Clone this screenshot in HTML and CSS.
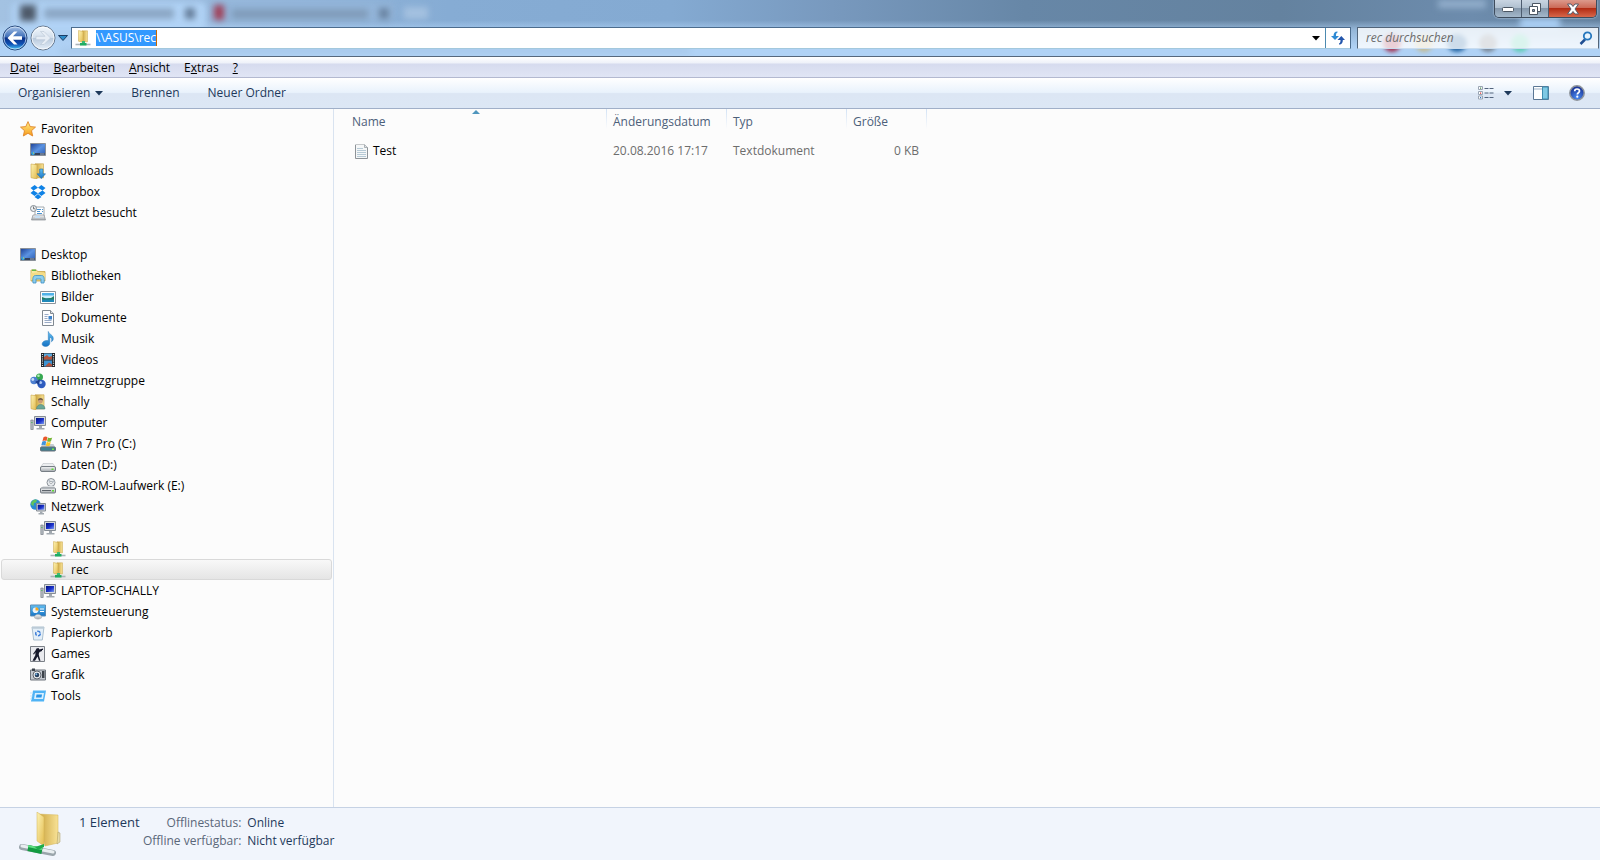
FILE: index.html
```html
<!DOCTYPE html>
<html lang="de">
<head>
<meta charset="utf-8">
<title>\\ASUS\rec</title>
<link rel="stylesheet" href="styles.css">
</head>
<body>
<svg class="sprite" aria-hidden="true">
  <defs>
    <linearGradient id="g-folder" x1="0" y1="0" x2="1" y2="1"><stop offset="0" stop-color="#fdf3b4"/><stop offset="1" stop-color="#e3bc50"/></linearGradient>
    <linearGradient id="g-folder2" x1="0" y1="0" x2="1" y2="0"><stop offset="0" stop-color="#c9a23c"/><stop offset="1" stop-color="#f8e296"/></linearGradient>
    <linearGradient id="g-blue" x1="0" y1="0" x2="1" y2="1"><stop offset="0" stop-color="#1c3f94"/><stop offset=".5" stop-color="#5b93e2"/><stop offset="1" stop-color="#2a59b0"/></linearGradient>
    <linearGradient id="g-sky" x1="0" y1="0" x2="0" y2="1"><stop offset="0" stop-color="#62bff2"/><stop offset="1" stop-color="#1673c4"/></linearGradient>
    <linearGradient id="g-grey" x1="0" y1="0" x2="0" y2="1"><stop offset="0" stop-color="#f6f7f8"/><stop offset="1" stop-color="#a3a8ad"/></linearGradient>
    <linearGradient id="g-star" x1="0" y1="0" x2="0" y2="1"><stop offset="0" stop-color="#fff08a"/><stop offset="1" stop-color="#f79a18"/></linearGradient>
    <linearGradient id="g-screen" x1="0" y1="0" x2="1" y2="1"><stop offset="0" stop-color="#00107c"/><stop offset=".55" stop-color="#1b32cc"/><stop offset="1" stop-color="#7b9bf2"/></linearGradient>
    <linearGradient id="g-back" x1="0" y1="0" x2="0" y2="1"><stop offset="0" stop-color="#a9c4e8"/><stop offset=".45" stop-color="#3f6fb8"/><stop offset=".5" stop-color="#0b3187"/><stop offset=".75" stop-color="#0d50b4"/><stop offset="1" stop-color="#4bd0fb"/></linearGradient>
    <linearGradient id="g-fwd" x1="0" y1="0" x2="0" y2="1"><stop offset="0" stop-color="#f3f8fd"/><stop offset=".48" stop-color="#d3dfec"/><stop offset=".5" stop-color="#b7c8db"/><stop offset="1" stop-color="#e6f0fa"/></linearGradient>
    <radialGradient id="g-help" cx=".5" cy=".8" r=".8"><stop offset="0" stop-color="#4a8af0"/><stop offset="1" stop-color="#142a8c"/></radialGradient>
  </defs>
  <symbol id="star" viewBox="0 0 16 16"><path d="M8 .6l2.200 5 5.300.5-4 3.600 1.200 5.300L8 12.300 3.300 15l1.200-5.300-4-3.600 5.300-.5z" fill="url(#g-star)" stroke="#e0862a" stroke-width=".9"/></symbol>
  <symbol id="desktop" viewBox="0 0 16 16"><path d="M.5 1.500h15v12H.5z" fill="url(#g-blue)" stroke="#8a9098"/><path d="M1 11h14v2H1z" fill="#34435c"/><circle cx="3" cy="11.500" r="1.800" fill="#2f9fe0"/><path d="M3 10l1.500 1.500H3z" fill="#f3d042"/><path d="M10 11.500h4.500v1H10z" fill="#9fb1c8"/></symbol>
  <symbol id="downloads" viewBox="0 0 16 16"><path d="M5 .8h8.500v14H5z" fill="url(#g-folder2)" stroke="#c09a40" stroke-width=".6"/><path d="M1 1l6 .8V16l-6-1.300z" fill="url(#g-folder)" stroke="#c9a549" stroke-width=".6"/><path d="M9.700 6h3.200v4.800h2.600L11.300 15.600 7.100 10.800h2.600z" fill="url(#g-sky)" stroke="#1d6cab" stroke-width=".6"/></symbol>
  <symbol id="dropbox" viewBox="0 0 16 16"><path d="M4.700 1L8 3.700 3.500 6.500.5 4zM11.300 1L8 3.700l4.500 2.800 3-2.500zM.5 9l3-2.500L8 9.300 4.700 12zM15.500 9l-3-2.500L8 9.300 11.300 12zM8 10l3.500 2.900L8 15.200l-3.500-2.300z" fill="#0f82e6"/></symbol>
  <symbol id="recent" viewBox="0 0 16 16"><path d="M5 2h9v9H5z" fill="#fff" stroke="#8c949c" stroke-width=".8"/><path d="M7 4.500h4m1 0h1M7 6.500h3m2 0h1M7 8.500h5" stroke="#4b94d2"/><path d="M3 10h11l1.500 5H1.500z" fill="url(#g-grey)" stroke="#868c92" stroke-width=".7"/><path d="M5 10.500h5v2.500H5z" fill="#c6dff4"/><circle cx="3.500" cy="3.500" r="3" fill="#eef2f5" stroke="#828a92"/><path d="M3.500 1.500v2.300H5.300" stroke="#555" stroke-width=".8" fill="none"/></symbol>
  <symbol id="library" viewBox="0 0 16 16"><path d="M1 2h5.500l1 1.500H15V13H1z" fill="url(#g-folder)" stroke="#c6a348" stroke-width=".8"/><path d="M2 1.500h4v1.500H2z" fill="#65b84a"/><path d="M1 5h14v7H1z" fill="#f5dc86"/><path d="M3 15c-.7-5 .2-7.500 2.500-7.500h6c2.500 0 3.200 2.500 2.500 7.500h-3v-4H6v4z" fill="#8ccdee" stroke="#3e8fc4" stroke-width=".8"/></symbol>
  <symbol id="picture" viewBox="0 0 16 16"><path d="M.5 2.500h15v12H.5z" fill="#fff" stroke="#8d949c"/><path d="M2 4h12v9H2z" fill="#4fb1e8"/><path d="M2 6.500h12V9H2z" fill="#cfeefb"/><path d="M2 8l4 1.500 5-.5 3-2v4H2z" fill="#237d62"/><path d="M2 10.500h12V13H2z" fill="#2089b8"/></symbol>
  <symbol id="document" viewBox="0 0 16 16"><path d="M2.500.5h8l3 3v12h-11z" fill="#fdfdfe" stroke="#818991"/><path d="M10.500.5v3h3" fill="#dde2e7" stroke="#818991"/><path d="M4.500 4.500h4M4.500 6.500h3M4.500 8.500h3M4.500 10.500h7M4.500 12.500h7" stroke="#9aabc6"/><path d="M8.500 6h3.500v3.500H8.500z" fill="#3d82c9"/></symbol>
  <symbol id="music" viewBox="0 0 16 16"><path d="M8.300.5c.8 3 5.700 3.600 4.900 8-.3 1-.8 1.700-1.700 2.200.8-3-.3-4-1.700-4.500v5.800c0 2-1.900 3.500-4.200 3.500-2 0-3.500-1-3.500-2.500 0-1.900 2.200-3.500 4.700-3.500.6 0 1.100.1 1.500.3z" fill="url(#g-sky)" stroke="#2477b8" stroke-width=".5"/></symbol>
  <symbol id="video" viewBox="0 0 16 16"><path d="M1 1h14v14H1z" fill="#22262b"/><path d="M4 1.500h8v6H4z" fill="#5aa9dc"/><path d="M4 8.500h8v6H4z" fill="#3c93d2"/><path d="M4 5l3-2 2 2 3-1v3.500H4zM5 14.500l4-4 3 2v2z" fill="#b5533a"/><path d="M2.500 2v13M13.500 2v13" stroke="#e6e9ec" stroke-width="1.200" stroke-dasharray="1 1.200"/></symbol>
  <symbol id="homegroup" viewBox="0 0 16 16"><circle cx="9.500" cy="4" r="3.500" fill="#36a850"/><circle cx="4" cy="7.500" r="3.700" fill="#4d7fd0"/><circle cx="11.500" cy="11" r="4.200" fill="#2e5cbf"/><circle cx="8.500" cy="2.800" r="1.300" fill="#b4ecba"/><circle cx="2.800" cy="6.500" r="1.400" fill="#c8dcf8"/><circle cx="10.500" cy="9.500" r="1.600" fill="#a8c6f4"/><path d="M5 9l4 3 1-6z" fill="#1b3f8f"/></symbol>
  <symbol id="user" viewBox="0 0 16 16"><path d="M5 .8h9v14H5z" fill="url(#g-folder2)" stroke="#c09a40" stroke-width=".6"/><path d="M1 1l5 .8V16l-5-1.300z" fill="url(#g-folder)" stroke="#c9a549" stroke-width=".6"/><circle cx="10.500" cy="7" r="2.400" fill="#c99a78"/><path d="M8 6.500c0-3.200 5-3.200 5 0-2-1.200-3-1-5 0z" fill="#6d5a45"/><path d="M6.500 15c0-6 8.500-6 8.500 0z" fill="#6ba698" stroke="#467a70" stroke-width=".5"/></symbol>
  <symbol id="computer" viewBox="0 0 16 16"><path d="M.8 5h2.400v9.500H.8z" fill="#b5bbc2" stroke="#6f767e" stroke-width=".6"/><path d="M1.400 7.500h1" stroke="#3ab54a"/><path d="M4.500 1.500h11v9h-11z" fill="#d4d8dc" stroke="#858c94"/><path d="M6 3h8v6H6z" fill="url(#g-screen)"/><path d="M9 11h3v2h2.500v1.500h-8V13H9z" fill="#a2a9b0"/></symbol>
  <symbol id="windrive" viewBox="0 0 16 16"><path d="M2.500 8h11l2 4H.5z" fill="#c6cdd2"/><rect x=".5" y="11" width="15" height="4" rx="1" fill="#3e8091" stroke="#697178"/><path d="M12 12.500h2V14h-2z" fill="#7bea43"/><path d="M3.500 1.200q2-1.500 4 0L6.500 5q-2-1.200-4 0z" fill="#e9572b"/><path d="M8 1.500q2 1.200 4.200 0L11 5.300q-2 1-4 0z" fill="#77b635"/><path d="M2.300 5.500q2-1.200 4 0l-1 3.800q-2-1.200-4 0z" fill="#3e93dc"/><path d="M6.800 5.800q2 1.200 4 0l-1 3.800q-2 1-4 0z" fill="#f8c627"/></symbol>
  <symbol id="drive" viewBox="0 0 16 16"><path d="M3 6.500h10l2.500 4H.5z" fill="#eceef0" stroke="#b0b5ba" stroke-width=".5"/><rect x=".5" y="9.500" width="15" height="5" rx="1.500" fill="url(#g-grey)" stroke="#777e85"/><path d="M11.500 11.500h2V13h-2z" fill="#5ddb33"/></symbol>
  <symbol id="disc" viewBox="0 0 16 16"><circle cx="11" cy="4.500" r="4" fill="#e8ebee" stroke="#8b9299"/><path d="M11 4.500L8.500 2M11 4.500l3.500-1.500" stroke="#b7bfc8" stroke-width="1.500"/><circle cx="11" cy="4.500" r="1.200" fill="#fff" stroke="#81888f" stroke-width=".6"/><path d="M3 8h11l1.500 2.500H.5z" fill="#dde0e3"/><rect x=".5" y="10" width="15" height="5" rx="1" fill="url(#g-grey)" stroke="#777e85"/><path d="M2 12.500h9" stroke="#5d646b"/><path d="M12 12h2v1.500h-2z" fill="#5ddb33"/></symbol>
  <symbol id="network" viewBox="0 0 16 16"><circle cx="5.500" cy="5.500" r="5.200" fill="#2b8bd3"/><path d="M1 4c2-4 5-4 6-3L6 3.500 4 4l-.5 3-2-1zM7 5l3-2v4z" fill="#61c45b"/><path d="M6.500 4.500h9v7.500h-9z" fill="#d4d8dc" stroke="#858c94"/><path d="M7.700 5.700h6.600v5H7.700z" fill="url(#g-screen)"/><path d="M10 12.500h2.500V14H14v1.500H8.500V14H10z" fill="#a2a9b0"/></symbol>
  <symbol id="share" viewBox="0 0 16 16"><path d="M7 .8h5.500v11H7z" fill="url(#g-folder2)" stroke="#c9a549" stroke-width=".5"/><path d="M3.500.5L8 1.500V12.500l-4.500-1.300z" fill="url(#g-folder)" stroke="#c9a549" stroke-width=".5"/><path d="M7 11h3v2H7z" fill="#3cb977"/><path d="M.5 14.500h15" stroke="#abb4ba" stroke-width="1.600"/><path d="M5 13h6.500v2.500H5z" fill="#1fae62"/></symbol>
  <symbol id="control" viewBox="0 0 16 16"><path d="M.5 1h15v11H.5z" fill="url(#g-sky)" stroke="#5d8db5"/><circle cx="5.500" cy="6.200" r="2.800" fill="#e6f2fc"/><path d="M5.500 6.500V3.200a3 3 0 0 1 3 3.300z" fill="#f5a623"/><path d="M10 5h4M10 7.500h4" stroke="#fff"/><path d="M8 10.500c2.500 0 4 1.500 3.500 3.500-2 1.500-5 1.500-7 0 -.5-2 1-3.500 3.500-3.500z" fill="url(#g-grey)" stroke="#a9afb5" stroke-width=".5"/></symbol>
  <symbol id="bin" viewBox="0 0 16 16"><path d="M2 2h12l-1.700 13H3.700z" fill="#e4eff8" stroke="#9bb2c4" stroke-width=".8"/><path d="M2 2h12l-.3 1.700H2.300z" fill="#bccbd7"/><circle cx="8" cy="8.500" r="2.300" fill="none" stroke="#3f7fd9" stroke-width="1.500" stroke-dasharray="3.300 1.200"/></symbol>
  <symbol id="games" viewBox="0 0 16 16"><path d="M.5.5h14v15H.5z" fill="#e9eaee" stroke="#7b8087"/><path d="M6.500 2.500l2-.5 1 1.500 3.500-1v1.500h-1v1l-2.500 1-.8 2 .3 1.700 1.500 5H9L7.500 10.500 5 14.700H2.500l2.800-5.500.2-3L4 8.500l-1-.5L5.500 4.500z" fill="#15182a"/></symbol>
  <symbol id="camera" viewBox="0 0 16 16"><path d="M.5 3h15v10H.5z" fill="#c3c8cf" stroke="#6f757d"/><path d="M2 1.500h3V4H2zM12 4h2.500v7H12z" fill="#3d434b"/><circle cx="7" cy="8" r="4" fill="#eef0f3" stroke="#60666e"/><circle cx="7" cy="8" r="2.300" fill="#26405f"/><circle cx="6.300" cy="7.300" r="1" fill="#7db8e8"/></symbol>
  <symbol id="tools" viewBox="0 0 16 16"><path d="M3 2.500h13L14 13.500H1z" fill="#4fb3f5"/><path d="M5 5h9l-1 6H4z" fill="#d9f0ff"/><path d="M6.500 6.500h5.500l-.5 3H6z" fill="#2793e6"/><path d="M0 5h3M0 8h2.500M0 11h2" stroke="#c6e7fd"/></symbol>
  <symbol id="textfile" viewBox="0 0 16 16"><path d="M1.500 1.500h9l3 3v11h-12z" fill="#f5f7f8" stroke="#8d9398"/><path d="M1.500 1.500h9" stroke="#fff" stroke-dasharray="1 1"/><path d="M10.500 1.500v3h3" fill="#dfe3e6" stroke="#9ba1a6" stroke-width=".8"/><path d="M3 5.500h6M3 7.500h9M3 9.500h9M3 11.500h9M3 13.500h9" stroke="#b6cad6"/></symbol>
</svg>

<div class="window">
  <header class="glass">
    <div class="backdrop" aria-hidden="true">
      <span class="tab tab-active"></span><span class="tab tab-second"></span>
      <span class="smudge s-fav"></span><span class="smudge s-title"></span><span class="smudge s-x1"></span>
      <span class="smudge s-red"></span><span class="smudge s-title2"></span><span class="smudge s-x2"></span>
      <span class="smudge s-new"></span><span class="smudge s-user"></span>
      <span class="smudge s-page"></span><span class="smudge s-glow"></span>
      <span class="dot d1"></span><span class="dot d2"></span><span class="dot d3"></span><span class="dot d4"></span><span class="dot d5"></span>
    </div>
    <div class="caption">
      <button class="cap" aria-label="Minimieren"><svg width="14" height="8" viewBox="0 0 14 8"><rect x="1.500" y="2.500" width="11" height="4" rx="1" fill="#fff" stroke="#4b5663"/></svg></button>
      <button class="cap" aria-label="Verkleinern"><svg width="14" height="14" viewBox="0 0 14 14"><path d="M4.500 1.500h8v8h-8z" fill="#fff" stroke="#4b5663"/><path d="M1.500 4.500h8v8h-8z" fill="#fff" stroke="#4b5663"/><path d="M4.500 7.500h2v2h-2z" fill="#8b9bb0" stroke="#4b5663"/></svg></button>
      <button class="cap close" aria-label="Schließen"><svg width="14" height="12" viewBox="0 0 14 12"><path d="M1.500 1h3.500L7 3.500 9 1h3.500L9 6l3.500 5H9L7 8.500 5 11H1.500L5 6z" fill="#fff" stroke="#565b69"/></svg></button>
    </div>
    <div class="navbar">
      <div class="travel">
        <button aria-label="Zurück"><svg width="26" height="26" viewBox="0 0 26 26"><circle cx="13" cy="13" r="12" fill="url(#g-back)" stroke="#284a7c"/><circle cx="13" cy="13" r="11" fill="none" stroke="#dceafa" stroke-opacity=".7"/><path d="M12 6.500L5.500 13l6.500 6.500h3.500l-4.500-4.800H20v-3.400h-9l4.500-4.800z" fill="#fff"/></svg></button>
        <button aria-label="Vorwärts"><svg width="26" height="26" viewBox="0 0 26 26"><circle cx="13" cy="13" r="12" fill="url(#g-fwd)" stroke="#66788e"/><circle cx="13" cy="13" r="11" fill="none" stroke="#fff" stroke-opacity=".7"/><path d="M14 6.500l6.500 6.500-6.500 6.500h-3.500l4.500-4.800H6v-3.400h9l-4.500-4.800z" fill="#e6edf5" stroke="#b9c6d5" stroke-width=".6"/></svg></button>
        <button class="history" aria-label="Letzte Seiten"><svg width="10" height="6" viewBox="0 0 10 6"><path d="M.5.5h9L5 5.500z" fill="#2d8cc9" stroke="#1c3e66"/></svg></button>
      </div>
      <div class="address">
        <svg class="ico"><use href="#share"/></svg>
        <div class="path" role="textbox" tabindex="0" aria-label="Adresse"><span class="selected-text">\\ASUS\rec</span></div>
        <button class="drop" aria-label="Vorherige Orte"><svg width="8" height="5" viewBox="0 0 8 5"><path d="M0 0h8L4 4.500z" fill="#000"/></svg></button>
        <button class="refresh" aria-label="Aktualisieren"><svg width="16" height="16" viewBox="0 0 16 16"><path d="M7.500 1.500C4.500 1.500 3.500 3.500 3.500 6H1l4 4 4-4H6c0-2 .2-3 1.500-3.500z" fill="#2e8ad4"/><path d="M9 14.500c3 0 3.800-2 3.800-4.500H15l-3.700-4-3.800 4h3c0 2-.2 3-1.500 3.500z" fill="#2456ac"/></svg></button>
      </div>
      <div class="search">
        <input type="search" placeholder="rec durchsuchen" aria-label="rec durchsuchen">
        <svg width="14" height="14" viewBox="0 0 14 14"><path d="M6 8.500L1.500 13" stroke="#1f4f93" stroke-width="2.500"/><circle cx="8.500" cy="5" r="3.700" fill="#e8f4fd" stroke="#2677bd" stroke-width="1.800"/></svg>
      </div>
    </div>
  </header>

  <nav class="menubar" aria-label="Menü">
    <button><u>D</u>atei</button><button><u>B</u>earbeiten</button><button><u>A</u>nsicht</button><button>E<u>x</u>tras</button><button><u>?</u></button>
  </nav>

  <div class="toolbar">
    <button>Organisieren <svg width="8" height="5" viewBox="0 0 8 5"><path d="M0 0h8L4 4.500z" fill="#1e395b"/></svg></button>
    <button>Brennen</button>
    <button>Neuer Ordner</button>
    <span class="spacer"></span>
    <button class="tool" aria-label="Ansicht ändern"><svg width="16" height="14" viewBox="0 0 16 14"><path d="M.5.5h4v3h-4zM.5 5.500h4v3h-4zM.5 10h4v3h-4z" fill="#fff" stroke="#9aa5b3"/><path d="M2 1.500h1.200v1.200H2z" fill="#4a8a4a"/><path d="M2 6.500h1.200v1.200H2z" fill="#d33"/><path d="M2 11h1.200v1.200H2z" fill="#3577c9"/><path d="M6.500 2.500h4m1 0h4M6.500 7h4m1 0h4M6.500 11.500h4m1 0h4" stroke="#53647d"/></svg></button>
    <button class="tool view-drop" aria-label="Weitere Optionen"><svg width="8" height="5" viewBox="0 0 8 5"><path d="M0 0h8L4 4.500z" fill="#1e395b"/></svg></button>
    <button class="tool pane" aria-label="Vorschaufenster"><svg width="16" height="14" viewBox="0 0 16 14"><path d="M.5.5h15v13H.5z" fill="#fff" stroke="#5b7794"/><path d="M1 3h8" stroke="#9bb0c6"/><path d="M9.500 1h5.500v12H9.500z" fill="#7fc9e4" stroke="#3f8db0"/></svg></button>
    <button class="tool help" aria-label="Hilfe"><svg width="16" height="16" viewBox="0 0 16 16"><circle cx="8" cy="8" r="7.200" fill="url(#g-help)" stroke="#8f959c" stroke-width="1.500"/><path d="M5.700 6.200C5.700 3.300 10.500 3.300 10.500 6c0 1.700-2.200 1.800-2.200 3.500" fill="none" stroke="#fff" stroke-width="1.700"/><circle cx="8.300" cy="11.700" r="1.100" fill="#fff"/></svg></button>
  </div>

  <main class="body">
    <nav class="tree" aria-label="Navigationsbereich">
      <ul>
        <li><a href="#" class="l0"><svg class="ico"><use href="#star"/></svg>Favoriten</a></li>
        <li><a href="#" class="l1"><svg class="ico"><use href="#desktop"/></svg>Desktop</a></li>
        <li><a href="#" class="l1"><svg class="ico"><use href="#downloads"/></svg>Downloads</a></li>
        <li><a href="#" class="l1"><svg class="ico"><use href="#dropbox"/></svg>Dropbox</a></li>
        <li><a href="#" class="l1"><svg class="ico"><use href="#recent"/></svg>Zuletzt besucht</a></li>
      </ul>
      <ul>
        <li><a href="#" class="l0"><svg class="ico"><use href="#desktop"/></svg>Desktop</a></li>
        <li><a href="#" class="l1"><svg class="ico"><use href="#library"/></svg>Bibliotheken</a></li>
        <li><a href="#" class="l2"><svg class="ico"><use href="#picture"/></svg>Bilder</a></li>
        <li><a href="#" class="l2"><svg class="ico"><use href="#document"/></svg>Dokumente</a></li>
        <li><a href="#" class="l2"><svg class="ico"><use href="#music"/></svg>Musik</a></li>
        <li><a href="#" class="l2"><svg class="ico"><use href="#video"/></svg>Videos</a></li>
        <li><a href="#" class="l1"><svg class="ico"><use href="#homegroup"/></svg>Heimnetzgruppe</a></li>
        <li><a href="#" class="l1"><svg class="ico"><use href="#user"/></svg>Schally</a></li>
        <li><a href="#" class="l1"><svg class="ico"><use href="#computer"/></svg>Computer</a></li>
        <li><a href="#" class="l2"><svg class="ico"><use href="#windrive"/></svg>Win 7 Pro (C:)</a></li>
        <li><a href="#" class="l2"><svg class="ico"><use href="#drive"/></svg>Daten (D:)</a></li>
        <li><a href="#" class="l2"><svg class="ico"><use href="#disc"/></svg>BD-ROM-Laufwerk (E:)</a></li>
        <li><a href="#" class="l1"><svg class="ico"><use href="#network"/></svg>Netzwerk</a></li>
        <li><a href="#" class="l2"><svg class="ico"><use href="#computer"/></svg>ASUS</a></li>
        <li><a href="#" class="l3"><svg class="ico"><use href="#share"/></svg>Austausch</a></li>
        <li><a href="#" class="l3 current" aria-current="page"><svg class="ico"><use href="#share"/></svg>rec</a></li>
        <li><a href="#" class="l2"><svg class="ico"><use href="#computer"/></svg>LAPTOP-SCHALLY</a></li>
        <li><a href="#" class="l1"><svg class="ico"><use href="#control"/></svg>Systemsteuerung</a></li>
        <li><a href="#" class="l1"><svg class="ico"><use href="#bin"/></svg>Papierkorb</a></li>
        <li><a href="#" class="l1"><svg class="ico"><use href="#games"/></svg>Games</a></li>
        <li><a href="#" class="l1"><svg class="ico"><use href="#camera"/></svg>Grafik</a></li>
        <li><a href="#" class="l1"><svg class="ico"><use href="#tools"/></svg>Tools</a></li>
      </ul>
    </nav>
    <section class="files" aria-label="Dateien">
      <table>
        <colgroup><col class="c-name"><col class="c-date"><col class="c-type"><col class="c-size"></colgroup>
        <thead><tr>
          <th scope="col" aria-sort="ascending">Name<svg class="sort" width="8" height="4" viewBox="0 0 8 4"><path d="M4 0l4 4H0z" fill="#4f96bd"/></svg></th>
          <th scope="col">Änderungsdatum</th><th scope="col">Typ</th><th scope="col">Größe</th>
        </tr></thead>
        <tbody><tr>
          <td class="name"><svg class="ico"><use href="#textfile"/></svg>Test</td><td>20.08.2016 17:17</td><td>Textdokument</td><td class="size">0 KB</td>
        </tr></tbody>
      </table>
    </section>
  </main>

  <footer class="details">
    <svg class="big" width="44" height="46" viewBox="0 0 44 46"><path d="M20 2l20 1v28l-13 3z" fill="url(#g-folder2)" stroke="#d3b352" stroke-width=".5"/><path d="M19 0l7 5v29l-7-5z" fill="url(#g-folder)" stroke="#d3b352" stroke-width=".5"/><path d="M40 20l2 1v9l-3 2z" fill="#e8dca8" stroke="#a99a62" stroke-width=".5"/><path d="M4 35l31 6" stroke="#9aa5ab" stroke-width="6" stroke-linecap="round"/><path d="M4 34l31 6" stroke="#e9eef0" stroke-width="3" stroke-linecap="round"/><path d="M10 36l14 3" stroke="#139b41" stroke-width="6"/><path d="M10 34l14 3" stroke="#5fdf83" stroke-width="2"/><path d="M17 35l9-3v3l-6 3z" fill="#1eac4b"/></svg>
    <p class="count">1 Element</p>
    <dl>
      <dt>Offlinestatus:</dt><dd>Online</dd>
      <dt>Offline verfügbar:</dt><dd>Nicht verfügbar</dd>
    </dl>
  </footer>
</div>
</body>
</html>
```
FILE: styles.css
```css
* { box-sizing: border-box; }
body {
  margin: 0;
  font: 12px/20px "Open Sans", "Noto Sans", sans-serif;
  color: #000;
  background: #fcfcfc;
}
button {
  margin: 0;
  padding: 0;
  border: 0;
  background: none;
  font: inherit;
  color: inherit;
}
svg { display: block; flex: none; }
.sprite { position: absolute; width: 0; height: 0; }
.ico { width: 16px; height: 16px; }

.window { display: flex; flex-direction: column; min-height: 100vh; }

/* Glass title area */
.glass {
  position: relative;
  height: 57px;
  border-bottom: 1px solid #56677c;
  background:
    linear-gradient(to bottom, rgba(177, 212, 247, 0) 36%, rgba(177, 212, 247, .6) 52%, #b0d2f5 84%),
    linear-gradient(to right, #a3c2e2 0, #98b9dc 14%, #86acd4 28%, #84aad2 42%, #7899be 52%, #6787a7 64%, #64829f 80%, #6d8cad 92%, #64829f 100%);
}
.backdrop { position: absolute; inset: 0; overflow: hidden; }
.tab, .smudge, .dot { position: absolute; }
.tab { top: 2px; filter: blur(3px); border-radius: 6px; }
.tab-active { left: 12px; width: 194px; height: 30px; background: #b1d3f6; }
.tab-second { left: 212px; width: 182px; height: 20px; background: #93b5d9; }
.smudge { filter: blur(3px); background: #7890ab; }
.s-fav { left: 20px; top: 5px; width: 16px; height: 16px; background: #4d5969; }
.s-title { left: 44px; top: 8px; width: 130px; height: 11px; opacity: .65; }
.s-x1 { left: 185px; top: 8px; width: 10px; height: 11px; background: #647c98; }
.s-red { left: 214px; top: 5px; width: 10px; height: 15px; background: #a04058; }
.s-title2 { left: 232px; top: 9px; width: 136px; height: 10px; opacity: .65; }
.s-x2 { left: 379px; top: 8px; width: 10px; height: 11px; background: #6a84a2; }
.s-new { left: 404px; top: 7px; width: 24px; height: 12px; background: #a4c1e0; }
.s-user { left: 1438px; top: 0; width: 48px; height: 8px; background: #93afcc; }
.s-page { left: 60px; top: 50px; width: 630px; height: 2px; opacity: .4; }
.s-glow { left: 1520px; top: 18px; width: 40px; height: 12px; background: #a8cdf2; }
.dot { top: 34px; width: 18px; height: 18px; border-radius: 50%; filter: blur(2px); }
.d1 { left: 1383px; background: #a02848; }
.d2 { left: 1415px; background: #c3ba90; }
.d3 { left: 1447px; width: 20px; background: #1c609f; }
.d4 { left: 1479px; background: #75808d; }
.d5 { left: 1511px; background: #58cdb0; }

.caption {
  position: absolute;
  top: 0;
  right: 3px;
  display: flex;
  border: 1px solid #3e4c5d;
  border-top: 0;
  border-radius: 0 0 5px 5px;
  overflow: hidden;
  box-shadow: 0 0 2px #d7e6f5;
}
.cap {
  display: flex;
  align-items: center;
  justify-content: center;
  width: 27px;
  height: 17px;
  border-right: 1px solid #4d5c6f;
  background: linear-gradient(#c9d5e2, #b0c0d0 45%, #8598ac 50%, #a4b8cb);
}
.close {
  width: 47px;
  border-right: 0;
  background: linear-gradient(#dc9a8c, #cc6a57 45%, #b22c14 50%, #d8674a);
}

.navbar { position: relative; display: flex; align-items: center; height: 26px; margin-top: 25px; padding: 0 1px 0 2px; }
.travel { display: flex; align-items: center; gap: 2px; width: 69px; }
.address {
  display: flex;
  flex: 1;
  align-items: center;
  height: 22px;
  padding-left: 3px;
  border: 1px solid #4c6c8d;
  border-bottom-color: #a3c8dd;
  background: #fff;
}
.path { flex: 1; margin-left: 5px; line-height: 16px; outline: 0; }
.selected-text { display: inline-block; background: #3399ff; color: #fff; border-right: 1px solid #c86a00; }
.drop { display: flex; align-items: center; justify-content: center; width: 18px; height: 20px; }
.refresh {
  display: flex;
  align-items: center;
  justify-content: center;
  width: 25px;
  height: 20px;
  border-left: 1px solid #4c8ab0;
}
.search {
  display: flex;
  align-items: center;
  width: 242px;
  height: 22px;
  margin-left: 6px;
  padding: 0 5px 0 8px;
  border: 1px solid #52657a;
  border-bottom-color: #c9dcee;
  background: rgba(255, 255, 255, .78);
}
.search input {
  flex: 1;
  min-width: 0;
  padding: 0;
  border: 0;
  outline: 0;
  background: none;
  font: italic 12px/20px "Open Sans", "Noto Sans", sans-serif;
}
.search input::placeholder { color: #6d6d6d; opacity: 1; }

.menubar {
  display: flex;
  gap: 14px;
  height: 21px;
  padding: 1px 10px 0;
  border-bottom: 1px solid #b3b9d0;
  background: linear-gradient(#fff, #eef1f9 30%, #d6dbee 35%, #e0e5f5);
  line-height: 20px;
}
.toolbar {
  display: flex;
  align-items: center;
  height: 31px;
  padding: 0 15px 0 18px;
  border-bottom: 1px solid #a0afc8;
  background: linear-gradient(#fff, #e9f2fc 48%, #dce6f4 52%, #dce7f5);
  color: #1e395b;
}
.toolbar button { display: flex; align-items: center; gap: 5px; margin-right: 28px; }
.toolbar .spacer { flex: 1; }
.toolbar .tool { margin-right: 10px; }
.toolbar .view-drop { margin-right: 21px; }
.toolbar .pane { margin-right: 20px; }
.toolbar .help { margin-right: 0; }

.body { display: flex; flex: 1; }
.tree { width: 334px; padding: 9px 1px 0; border-right: 1px solid #d9e3f0; }
.tree ul { margin: 0 0 21px; padding: 0; list-style: none; }
.tree a {
  display: flex;
  align-items: center;
  gap: 5px;
  height: 21px;
  border: 1px solid transparent;
  border-radius: 3px;
  color: #000;
  text-decoration: none;
}
.tree .l0 { padding-left: 18px; }
.tree .l1 { padding-left: 28px; }
.tree .l2 { padding-left: 38px; }
.tree .l3 { padding-left: 48px; }
.tree .current { border-color: #d9d9d9; background: linear-gradient(#f8f8f8, #e5e5e5); }

.files { flex: 1; }
table { width: 593px; table-layout: fixed; border-collapse: collapse; }
.c-name { width: 273px; }
.c-date, .c-type { width: 120px; }
.c-size { width: 80px; }
th {
  position: relative;
  height: 26px;
  padding: 0 6px;
  text-align: left;
  font-weight: 400;
  color: #4c607a;
  background: linear-gradient(#d2e2f5, #fcfcfc) right top / 1px 20px no-repeat;
}
th:first-child { padding-left: 18px; }
.sort { position: absolute; top: 1px; left: 138px; }
td { height: 31px; padding: 0 6px; color: #6d6d6d; }
.name { display: flex; align-items: center; gap: 3px; padding-left: 20px; color: #000; }
td.size { text-align: right; padding-right: 8px; }

.details {
  display: flex;
  min-height: 53px;
  padding: 4px 18px 0 18px;
  border-top: 1px solid #c6d2e4;
  background: #f1f5fc;
  line-height: 18px;
}
.details p, .details dl, .details dd { margin: 0; }
.details .count { width: 64px; margin-left: 17px; padding-top: 1px; font-size: 13px; color: #1e395b; white-space: nowrap; }
.details dl { display: grid; grid-template-columns: auto auto; align-content: start; gap: 0 6px; padding-top: 2px; }
.details dt { color: #5a6779; text-align: right; }
.details dd { color: #1e395b; }
```
